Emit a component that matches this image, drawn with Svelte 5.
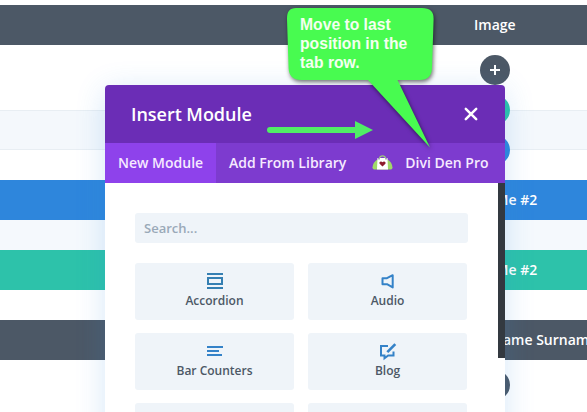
<script>
  const bands = [
    { h: 5, kind: 'plain' },
    { h: 40, kind: 'slate', label: 'Image', left: 474 },
    { h: 65, kind: 'plain' },
    { h: 40, kind: 'section' },
    { h: 30, kind: 'plain' },
    { h: 40, kind: 'blue', label: 'About Me #2', left: 451 },
    { h: 30, kind: 'pale' },
    { h: 40, kind: 'teal', label: 'About Me #2', left: 451 },
    { h: 30, kind: 'plain' },
    { h: 40, kind: 'slate', label: 'Name Surname', left: 492 },
    { h: 52, kind: 'plain' }
  ];
  const adders = [
    { y: 55, kind: 'slate' },
    { y: 95, kind: 'teal' },
    { y: 135, kind: 'blue' },
    { y: 370, kind: 'slate' }
  ];
  const modules = [
    { name: 'Accordion', icon: 'accordion' },
    { name: 'Audio', icon: 'audio' },
    { name: 'Bar Counters', icon: 'bars' },
    { name: 'Blog', icon: 'blog' },
    { name: '', icon: '' },
    { name: '', icon: '' }
  ];
</script>

<div class="page">
  <div class="canvas">
    {#each bands as band}
      <div class="band {band.kind}" style="height:{band.h}px">
        {#if band.label}<span style="margin-left:{band.left}px">{band.label}</span>{/if}
      </div>
    {/each}
  </div>

  {#each adders as a}
    <div class="adder {a.kind}" style="top:{a.y}px">
      <svg width="30" height="30" viewBox="0 0 30 30"><path d="M15 10v10M10 15h10" stroke="#fff" stroke-width="2" /></svg>
    </div>
  {/each}

  <div class="modal">
    <header>
      <h1>Insert Module</h1>
      <svg class="close" width="14" height="14" viewBox="0 0 14 14"><path d="M1.8 1.8l10.4 10.4M12.2 1.8L1.8 12.2" stroke="#fff" stroke-width="2.5" stroke-linecap="round" /></svg>
    </header>
    <nav>
      <div class="tab active">New Module</div>
      <div class="tab">Add From Library</div>
      <div class="tab den">
        <svg width="21" height="16" viewBox="0 0 21 16">
          <path d="M5.500 4.500C2.500 6 .7 9 .5 12.500c0 1.700 1.500 2 3 2h14c1.700 0 3-.3 3-2-.3-3.500-2-6.500-5-8z" fill="#a0d968" />
          <path d="M7.500 3Q8 .8 10.500 .8T13.500 3" fill="none" stroke="#9ccb7a" stroke-width="1.200" />
          <path d="M5.500 3h10l.5 11.500H5z" fill="#fff" />
          <path d="M7 3v1.500M14 3v1.500" stroke="#4c5866" stroke-width="1" />
          <path d="M10.500 11.500L7.600 8.700C6.600 6.800 9.300 5.600 10.500 7.300c1.200-1.700 3.900-.5 2.900 1.400z" fill="#8e1c2c" />
        </svg>
        <span>Divi Den Pro</span>
      </div>
    </nav>
    <div class="body">
      <div class="search">Search...</div>
      <div class="grid">
        {#each modules as m}
          <div class="card">
            {#if m.icon}
              <svg width="20" height="20" viewBox="0 0 20 20" fill="none" stroke="#3482c8" stroke-width="2">
                {#if m.icon === 'accordion'}
                  <path d="M2 3h16M2 17h16M3 7h14v6H3z" stroke="#357fb2" />
                {:else if m.icon === 'audio'}
                  <path d="M4.500 7.200h4.500L14.700 4.200v12.200L9 13.200H4.500z" stroke-linejoin="round" />
                {:else if m.icon === 'bars'}
                  <path d="M2 6h16M2 10h12M2 14h15" />
                {:else}
                  <path d="M10 5H3v9.500h3.500v2.700l3.700-2.700H15.500v-4" />
                  <path d="M17.300 3.200L9.300 11.200" stroke-width="2.600" />
                {/if}
              </svg>
              <span>{m.name}</span>
            {/if}
          </div>
        {/each}
      </div>
    </div>
    <div class="scrollbar"></div>
  </div>

  <svg class="arrow" width="106" height="18" viewBox="0 0 106 18">
    <path d="M3 9h87" stroke="#50ee66" stroke-width="6" stroke-linecap="round" />
    <path d="M88 0l18 9-18 9z" fill="#50ee66" />
  </svg>

  <div class="callout">
    <svg width="160" height="155" viewBox="0 0 160 155">
      <path d="M16 8L142 8Q154 8 153.600 19L152 68Q151.500 80 140 80H117.500L150 147.500L88 80H21Q9 80 8.600 68L7 19Q6.600 8 16 8z" fill="#48fb50" />
    </svg>
    <p>Move to last<br />position in the<br />tab row.</p>
  </div>
</div>

<style>
  :global(body) { margin: 0; }
  .page {
    position: relative;
    width: 587px;
    height: 412px;
    overflow: hidden;
    background: #fff;
    font-family: "Open Sans", "Noto Sans", sans-serif;
    font-weight: 600;
  }
  .canvas { display: flex; flex-direction: column; }
  .band {
    flex: none;
    box-sizing: border-box;
    display: flex;
    align-items: center;
    overflow: hidden;
    padding-bottom: 2px;
    color: #fff;
    font-size: 14px;
    white-space: nowrap;
  }
  .plain { background: #fff; }
  .pale { background: #f5f9fd; }
  .section { background: #f4f8fc; border: solid #e8eef3; border-width: 1px 0; }
  .slate { background: #4c5866; }
  .blue { background: #2e86dc; }
  .teal { background: #2dc2aa; }
  .adder {
    position: absolute;
    left: 480px;
    width: 30px;
    height: 30px;
    border-radius: 50%;
  }
  .adder svg { display: block; }
  .modal {
    position: absolute;
    left: 105px;
    top: 85px;
    width: 400px;
    height: 400px;
    background: #fff;
    border-radius: 4px 4px 0 0;
    box-shadow: 0 5px 30px rgba(43, 135, 218, 0.2);
  }
  header {
    height: 58px;
    box-sizing: border-box;
    padding: 0 27px 0 26px;
    display: flex;
    align-items: center;
    justify-content: space-between;
    background: #6b2db6;
    border-radius: 4px 4px 0 0;
  }
  h1 { margin: 0; color: #fff; font-size: 18px; font-weight: 600; line-height: 58px; letter-spacing: -0.04px; }
  .close { display: block; }
  nav { display: flex; height: 40px; background: #7d3bcf; }
  .tab {
    display: flex;
    align-items: center;
    box-sizing: border-box;
    padding: 0 13px 1px;
    color: #f6eaff;
    font-size: 14px;
    white-space: nowrap;
  }
  .active { width: 111px; background: #8e42eb; }
  .den svg { display: block; margin-right: 12px; }
  .body { padding: 30px 37px 0 30px; }
  .search {
    height: 30px;
    padding-left: 9px;
    border-radius: 3px;
    background: #eff4f9;
    color: #9aa9b8;
    font-size: 13px;
    line-height: 30px;
  }
  .grid {
    display: grid;
    grid-template-columns: 159px 159px;
    grid-auto-rows: 57px;
    gap: 13px 14px;
    margin-top: 20px;
  }
  .card {
    display: flex;
    flex-direction: column;
    align-items: center;
    box-sizing: border-box;
    padding-top: 8px;
    border-radius: 3px;
    background: #eff4f9;
    color: #4c5866;
    font-size: 12px;
    line-height: 20px;
  }
  .card svg { display: block; }
  .scrollbar {
    position: absolute;
    right: 0;
    top: 98px;
    width: 7px;
    height: 175px;
    background: #333940;
  }
  .arrow { position: absolute; left: 267px; top: 121px; }
  .callout { position: absolute; left: 280px; top: 0; width: 160px; height: 155px; }
  .callout svg { display: block; filter: drop-shadow(1px 2px 2px rgba(0, 0, 0, 0.55)); }
  .callout p {
    position: absolute;
    left: 20px;
    top: 15px;
    margin: 0;
    color: #f4fff0;
    font: bold 15.7px/19px "Liberation Sans", Arial, sans-serif;
    white-space: nowrap;
  }
</style>
